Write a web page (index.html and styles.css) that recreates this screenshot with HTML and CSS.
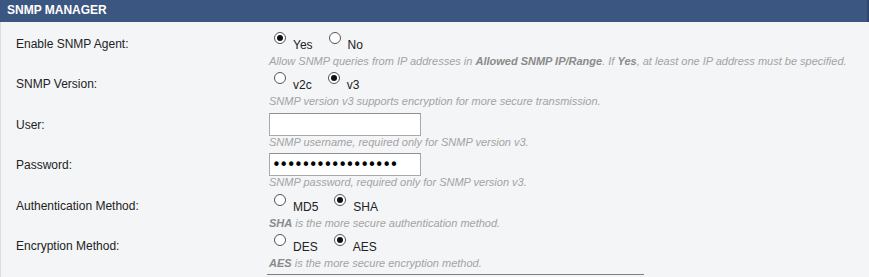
FILE: index.html
```html
<!DOCTYPE html>
<html>
<head>
<meta charset="utf-8">
<link rel="stylesheet" href="styles.css">
</head>
<body>
<div class="panel">
  <div class="header">SNMP MANAGER</div>
  <div class="form">
    <div class="row">
      <div class="label">Enable SNMP Agent:</div>
      <div class="field">
        <div class="ctl">
          <input type="radio" name="agent" checked><span class="opt">Yes</span>
          <input type="radio" name="agent"><span class="opt">No</span>
        </div>
        <div class="help">Allow SNMP queries from IP addresses in <b>Allowed SNMP IP/Range</b>. If <b>Yes</b>, at least one IP address must be specified.</div>
      </div>
    </div>
    <div class="row">
      <div class="label">SNMP Version:</div>
      <div class="field">
        <div class="ctl">
          <input type="radio" name="ver"><span class="opt">v2c</span>
          <input type="radio" name="ver" checked><span class="opt">v3</span>
        </div>
        <div class="help">SNMP version v3 supports encryption for more secure transmission.</div>
      </div>
    </div>
    <div class="row">
      <div class="label">User:</div>
      <div class="field">
        <div class="ctl">
          <input type="text" class="txt">
        </div>
        <div class="help">SNMP username, required only for SNMP version v3.</div>
      </div>
    </div>
    <div class="row">
      <div class="label">Password:</div>
      <div class="field">
        <div class="ctl">
          <input type="password" class="txt pw" value="abcdefghijklmnopq">
        </div>
        <div class="help">SNMP password, required only for SNMP version v3.</div>
      </div>
    </div>
    <div class="row">
      <div class="label">Authentication Method:</div>
      <div class="field">
        <div class="ctl">
          <input type="radio" name="auth"><span class="opt">MD5</span>
          <input type="radio" name="auth" checked><span class="opt">SHA</span>
        </div>
        <div class="help"><b>SHA</b> is the more secure authentication method.</div>
      </div>
    </div>
    <div class="row">
      <div class="label">Encryption Method:</div>
      <div class="field">
        <div class="ctl">
          <input type="radio" name="enc"><span class="opt">DES</span>
          <input type="radio" name="enc" checked><span class="opt">AES</span>
        </div>
        <div class="help"><b>AES</b> is the more secure encryption method.</div>
        <div class="rule"></div>
      </div>
    </div>
  </div>
</div>
</body>
</html>
```
FILE: styles.css
```css
html, body {
  margin: 0;
  padding: 0;
  background: #f4f5f7;
  font-family: "Liberation Sans", Arial, sans-serif;
  font-size: 12px;
  color: #222;
  overflow: hidden;
}
.panel {
  width: 869px;
  height: 277px;
  border-left: 1px solid #dcdde0;
  box-sizing: border-box;
}
.header {
  height: 22px;
  background: #3b5680;
  border-right: 2px solid #2f4770;
  color: #fff;
  font-weight: bold;
  font-size: 12px;
  line-height: 21px;
  padding-left: 7px;
  margin-left: -1px;
}
.form {
  padding-top: 9px;
}
.row {
  display: flex;
  height: 40.4px;
}
.label {
  width: 253px;
  padding-left: 15px;
  padding-top: 3px;
  line-height: 20px;
  flex: none;
}
.field {
  flex: 1;
}
.ctl {
  height: 20px;
  display: flex;
  align-items: flex-start;
}
.opt {
  line-height: 20px;
  padding-top: 4px;
  margin-right: 11px;
}
input[type="radio"] {
  -webkit-appearance: none;
  appearance: none;
  width: 12px;
  height: 12px;
  margin: 1px 7px 0 5px;
  border: 1px solid #555;
  border-radius: 50%;
  background: #fff;
  box-sizing: border-box;
  position: relative;
  flex: none;
}
input[type="radio"]:checked::after {
  content: "";
  position: absolute;
  left: 2px;
  top: 2px;
  width: 6px;
  height: 6px;
  border-radius: 50%;
  background: #111;
}
.txt {
  width: 152px;
  height: 23px;
  margin: 1px 0 0 0;
  box-sizing: border-box;
  border: 1px solid #a9a9a9;
  border-top-color: #8f8f8f;
  background: #fff;
  padding: 0 2px;
  font-family: "Liberation Sans", Arial, sans-serif;
  font-size: 12px;
  outline: none;
}
.pw {
  font-family: "DejaVu Sans", sans-serif;
  font-size: 15px;
  letter-spacing: -1.5px;
  color: #000;
}
.help {
  font-style: italic;
  font-size: 11px;
  color: #a3a3a3;
  line-height: 20.4px;
  white-space: nowrap;
}
.help b {
  color: #8a8a8a;
}
.rule {
  width: 377px;
  margin-left: -2px;
  margin-top: 1px;
  border-top: 1px solid #7f7f7f;
}
```
